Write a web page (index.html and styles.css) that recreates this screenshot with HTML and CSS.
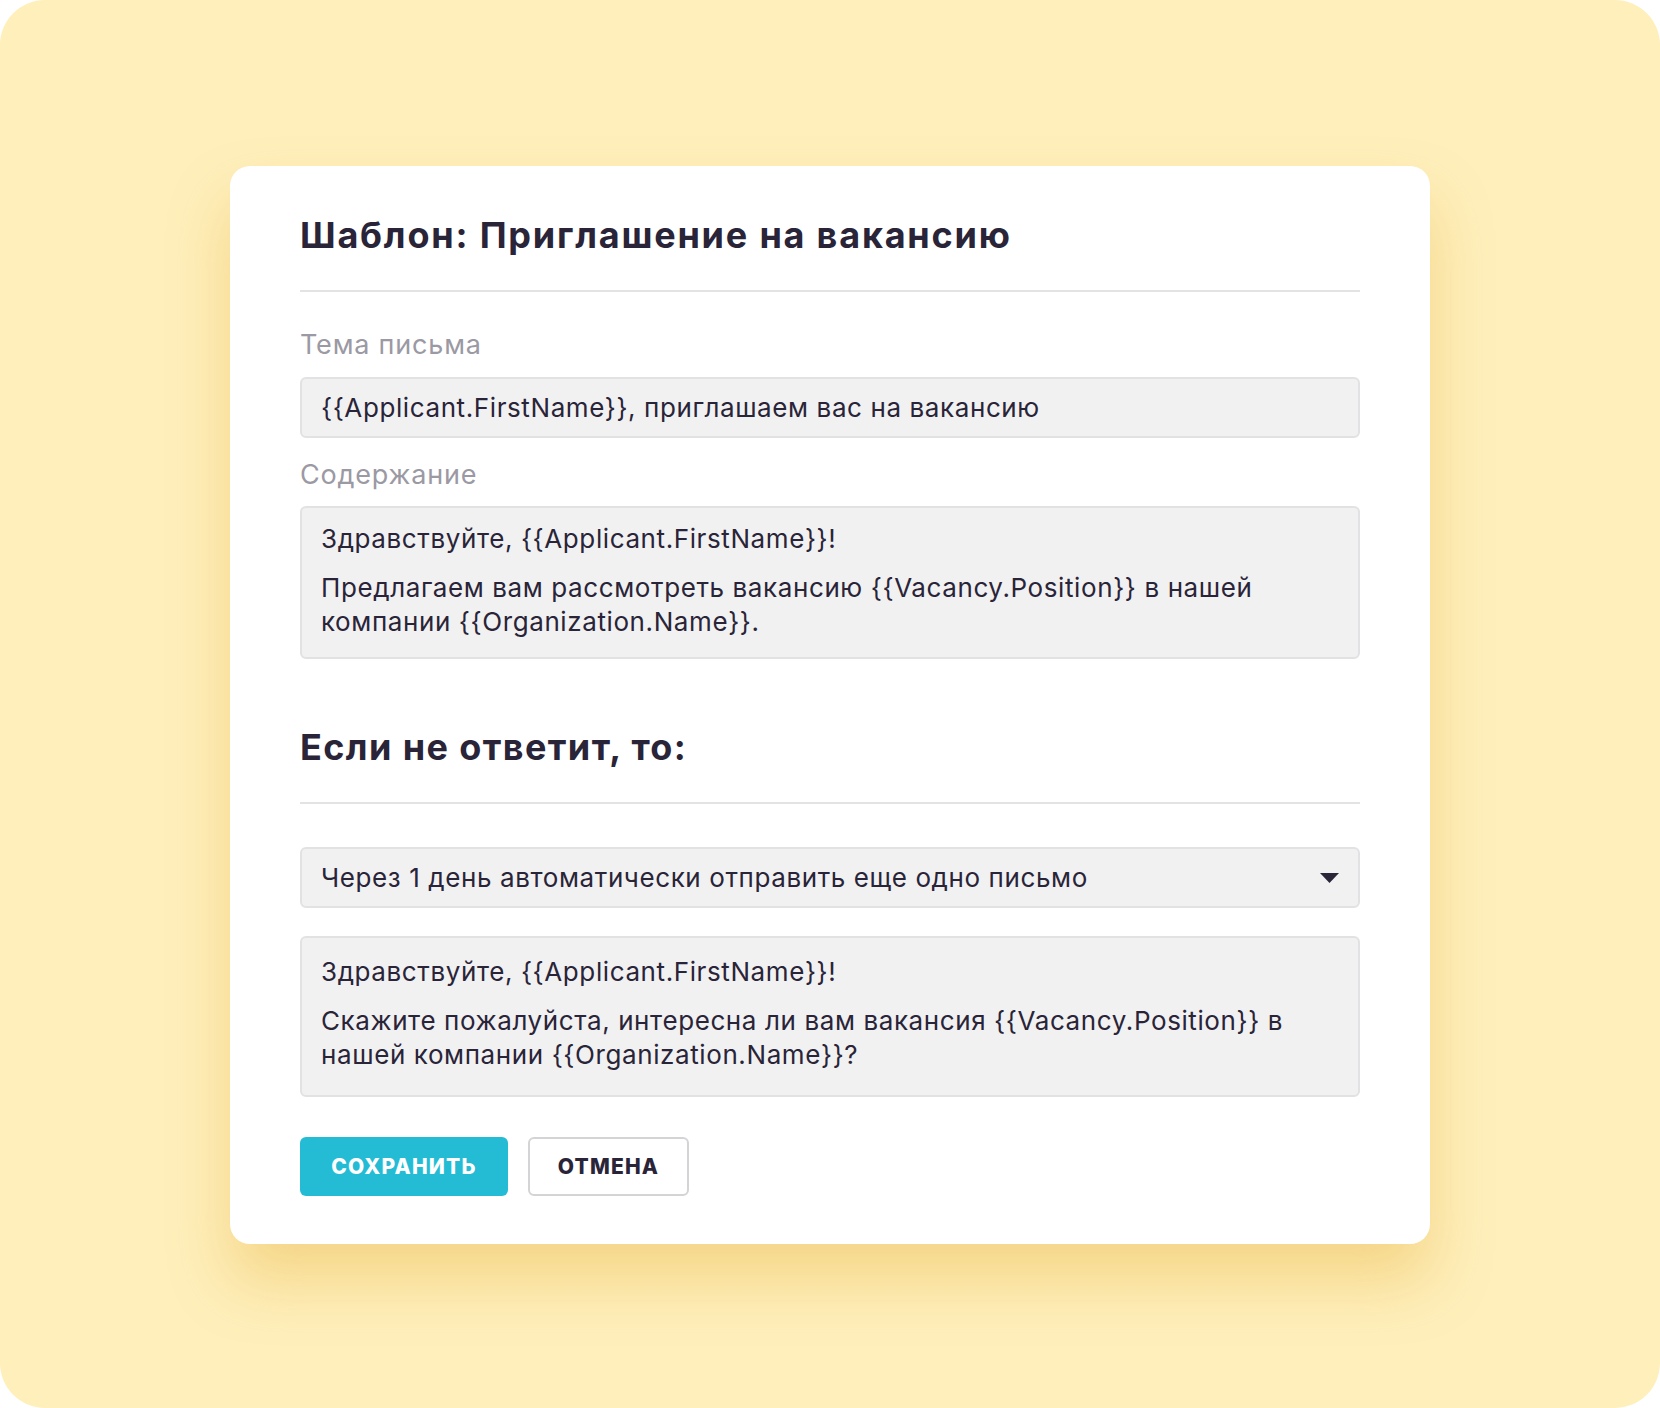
FILE: index.html
```html
<!DOCTYPE html>
<html lang="ru">
<head>
<meta charset="utf-8">
<title>Шаблон</title>
<link rel="stylesheet" href="styles.css">
</head>
<body>
<div class="frame">
  <div class="card">
    <h1 class="title">Шаблон: Приглашение на вакансию</h1>
    <div class="rule"></div>
    <div class="label label-first">Тема письма</div>
    <div class="field field-input">{{Applicant.FirstName}}, приглашаем вас на вакансию</div>
    <div class="label">Содержание</div>
    <div class="field field-area">
      <p class="para">Здравствуйте, {{Applicant.FirstName}}!</p>
      <p class="para">Предлагаем вам рассмотреть вакансию {{Vacancy.Position}} в нашей компании {{Organization.Name}}.</p>
    </div>
    <h2 class="title title-second">Если не ответит, то:</h2>
    <div class="rule"></div>
    <div class="field field-select">
      <span>Через 1 день автоматически отправить еще одно письмо</span>
      <svg class="caret" width="19" height="10" viewBox="0 0 19 10"><path d="M0 0 H19 L9.5 10 Z" fill="#2b2539"/></svg>
    </div>
    <div class="field field-area field-area2">
      <p class="para">Здравствуйте, {{Applicant.FirstName}}!</p>
      <p class="para">Скажите пожалуйста, интересна ли вам вакансия {{Vacancy.Position}} в нашей компании {{Organization.Name}}?</p>
    </div>
    <div class="actions">
      <button class="btn btn-primary">СОХРАНИТЬ</button>
      <button class="btn btn-secondary">ОТМЕНА</button>
    </div>
  </div>
</div>
</body>
</html>
```
FILE: styles.css
```css
* { box-sizing: border-box; }
html, body { margin: 0; padding: 0; background: #ffffff; }
body { font-family: "Inter", "Roboto", sans-serif; color: #2a2438; }

.frame {
  width: 1660px;
  height: 1408px;
  background: #feefbb;
  border-radius: 45px;
  padding: 166px 230px 0 230px;
}

.card {
  width: 1200px;
  height: 1078px;
  background: #ffffff;
  border-radius: 20px;
  padding: 42px 70px 0 70px;
  box-shadow: 0 36px 60px rgba(236, 186, 80, 0.48);
  display: flex;
  flex-direction: column;
}

.title {
  margin: 0;
  font-size: 36px;
  font-weight: 700;
  line-height: 54px;
  color: #2a2438;
  letter-spacing: 1.8px;
  white-space: nowrap;
}

.rule {
  height: 2px;
  background: #e3e3e5;
  margin-top: 28px;
}

.label {
  font-size: 27px;
  line-height: 32px;
  color: #9b99a3;
  letter-spacing: 0.8px;
  margin-top: 21px;
  margin-bottom: 15px;
}
.label-first { margin-top: 37px; margin-bottom: 16px; }

.field {
  background: #f1f1f2;
  border: 2px solid #e2e2e4;
  border-radius: 6px;
  font-size: 26px;
  letter-spacing: 0.6px;
  color: #2a2438;
  padding: 0 19px;
}

.field-input {
  height: 61px;
  display: flex;
  align-items: center;
}

.field-area {
  height: 153px;
  padding-top: 14px;
}
.para {
  margin: 0 0 15px 0;
  line-height: 34px;
}

.title-second { margin-top: 61px; letter-spacing: 1.4px; }

.field-select {
  margin-top: 43px;
  height: 61px;
  display: flex;
  align-items: center;
  justify-content: space-between;
  padding-right: 19px;
}
.caret { display: block; }

.field-area2 {
  margin-top: 28px;
  height: 161px;
  padding-top: 17px;
}

.actions {
  display: flex;
  gap: 20px;
  margin-top: 40px;
}
.btn {
  height: 59px;
  border-radius: 6px;
  font-family: "Inter", "Roboto", sans-serif;
  font-size: 21px;
  font-weight: 800;
  letter-spacing: 1.2px;
  padding: 0;
  cursor: pointer;
}
.btn-primary {
  width: 208px;
  background: #24bcd4;
  color: #ffffff;
  border: none;
}
.btn-secondary {
  width: 161px;
  background: #ffffff;
  color: #2a2438;
  border: 2px solid #d4d4d6;
}
```
